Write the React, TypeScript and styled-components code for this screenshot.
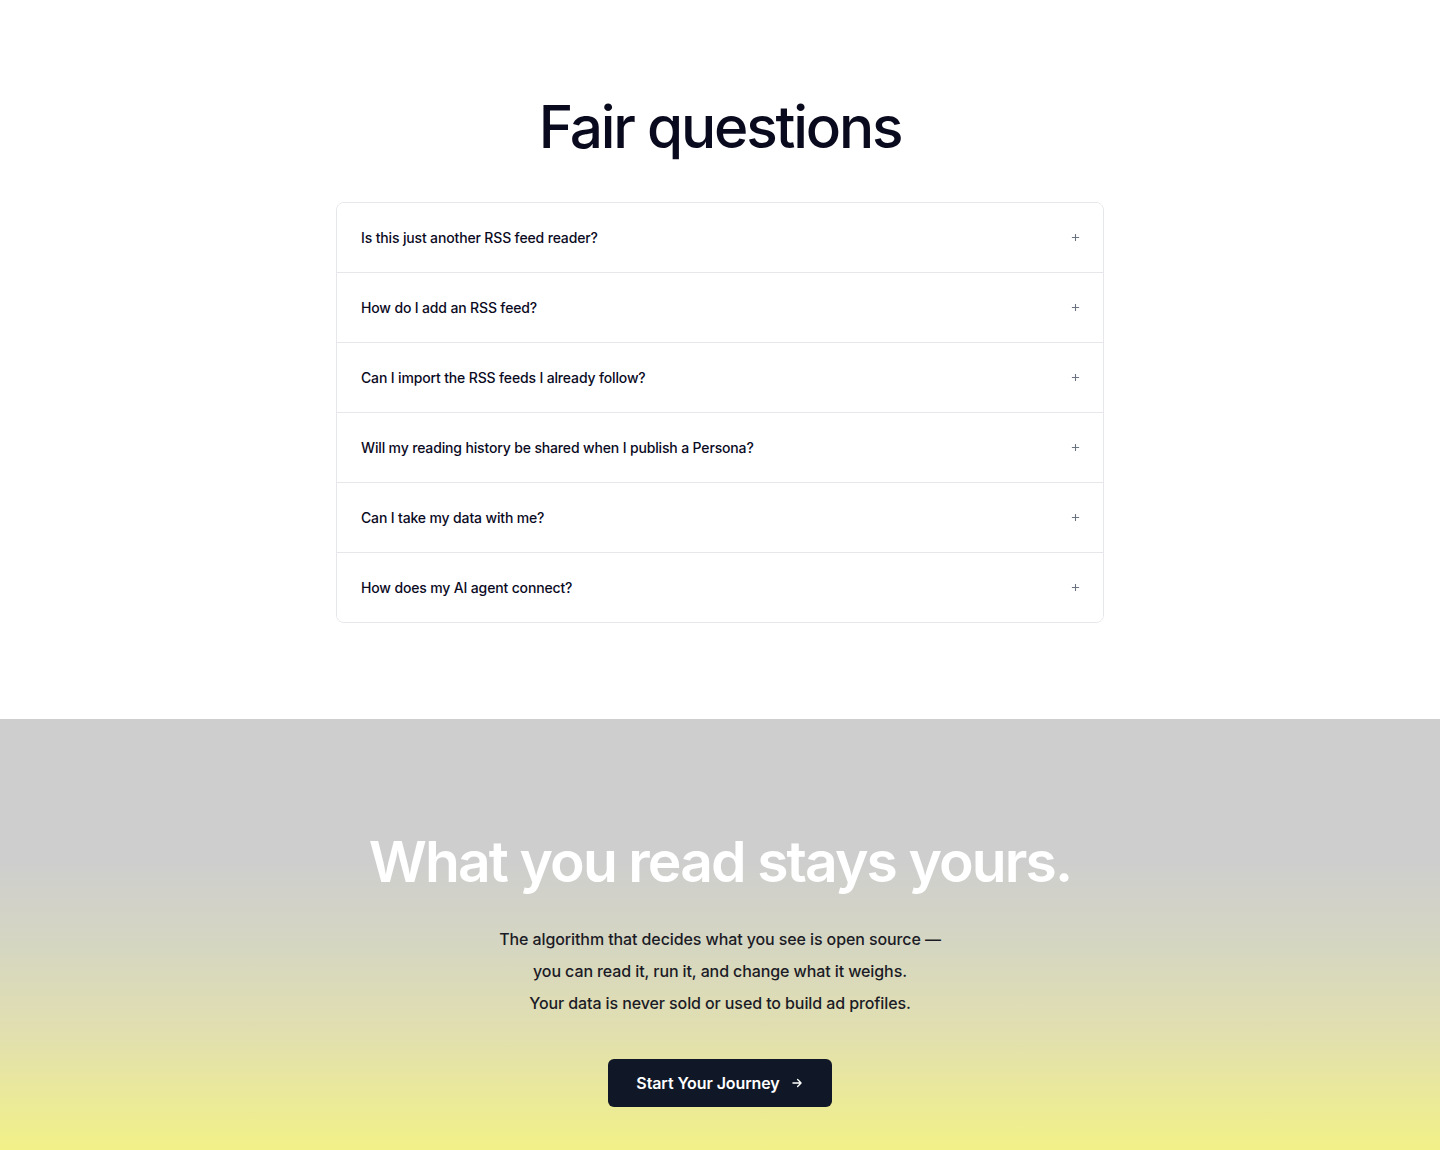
import styled, { createGlobalStyle } from "styled-components"

const GlobalStyle = createGlobalStyle`
  * { box-sizing: border-box; }
  body {
    margin: 0;
    background: #ffffff;
    font-family: Inter, "Noto Sans", sans-serif;
    color: #0b0b1f;
  }
`

const FaqSection = styled.section`
  display: flex;
  flex-direction: column;
  align-items: center;
  padding: 92px 0 96px;
`

const Title = styled.h2`
  margin: 0 0 40px;
  font-size: 58.5px;
  line-height: 70px;
  font-weight: 500;
  letter-spacing: -2.2px;
  color: #0a0a1e;
`

const Accordion = styled.div`
  width: 768px;
  border: 1px solid #e5e7eb;
  border-radius: 8px;
  overflow: hidden;
`

const Row = styled.button`
  display: flex;
  align-items: center;
  justify-content: space-between;
  width: 100%;
  height: 70px;
  padding: 0 24px;
  border: none;
  border-top: 1px solid #e5e7eb;
  background: #fff;
  cursor: pointer;
  font-family: inherit;
  font-size: 14px;
  font-weight: 500;
  letter-spacing: -0.15px;
  color: #0b0b1f;
  text-align: left;

  &:first-child {
    border-top: none;
    height: 69px;
  }
`

const Plus = styled.svg`
  width: 9px;
  height: 9px;
  margin-right: -1px;
  color: #6b7280;
`

const CtaSection = styled.section`
  display: flex;
  flex-direction: column;
  align-items: center;
  min-height: 431px;
  padding: 111px 0 40px;
  background: linear-gradient(
    to bottom,
    #cecece 0%,
    #cecece 33%,
    #d5d6c2 52%,
    #e1dfb0 72%,
    #f2f188 100%
  );
`

const CtaTitle = styled.h2`
  margin: 0 0 29px;
  font-size: 57px;
  line-height: 64px;
  font-weight: 600;
  letter-spacing: -1.9px;
  color: #ffffff;
`

const Copy = styled.p`
  margin: 0 0 40px;
  font-size: 16px;
  line-height: 32px;
  font-weight: 500;
  letter-spacing: -0.1px;
  color: #1b1b26;
  text-align: center;
`

const CtaButton = styled.button`
  display: flex;
  align-items: center;
  gap: 10px;
  height: 48px;
  padding: 0 28px;
  border: none;
  border-radius: 6px;
  background: #101828;
  color: #fff;
  font-family: inherit;
  font-size: 16px;
  font-weight: 600;
  letter-spacing: -0.1px;
  cursor: pointer;
`

const questions = [
  "Is this just another RSS feed reader?",
  "How do I add an RSS feed?",
  "Can I import the RSS feeds I already follow?",
  "Will my reading history be shared when I publish a Persona?",
  "Can I take my data with me?",
  "How does my AI agent connect?",
]

function App() {
  return (
    <>
      <GlobalStyle />
      <FaqSection>
        <Title>Fair questions</Title>
        <Accordion>
          {questions.map((q) => (
            <Row key={q}>
              {q}
              <Plus viewBox="0 0 10 10" fill="none" stroke="currentColor" strokeWidth="1.2">
                <path d="M5 1v8M1 5h8" />
              </Plus>
            </Row>
          ))}
        </Accordion>
      </FaqSection>

      <CtaSection>
        <CtaTitle>What you read stays yours.</CtaTitle>
        <Copy>
          The algorithm that decides what you see is open source —
          <br />
          you can read it, run it, and change what it weighs.
          <br />
          Your data is never sold or used to build ad profiles.
        </Copy>
        <CtaButton>
          Start Your Journey
          <svg width="14" height="14" viewBox="0 0 24 24" fill="none" stroke="currentColor" strokeWidth="2.2" strokeLinecap="round" strokeLinejoin="round">
            <path d="M5 12h14M13 6l6 6-6 6" />
          </svg>
        </CtaButton>
      </CtaSection>
    </>
  )
}

export default App
